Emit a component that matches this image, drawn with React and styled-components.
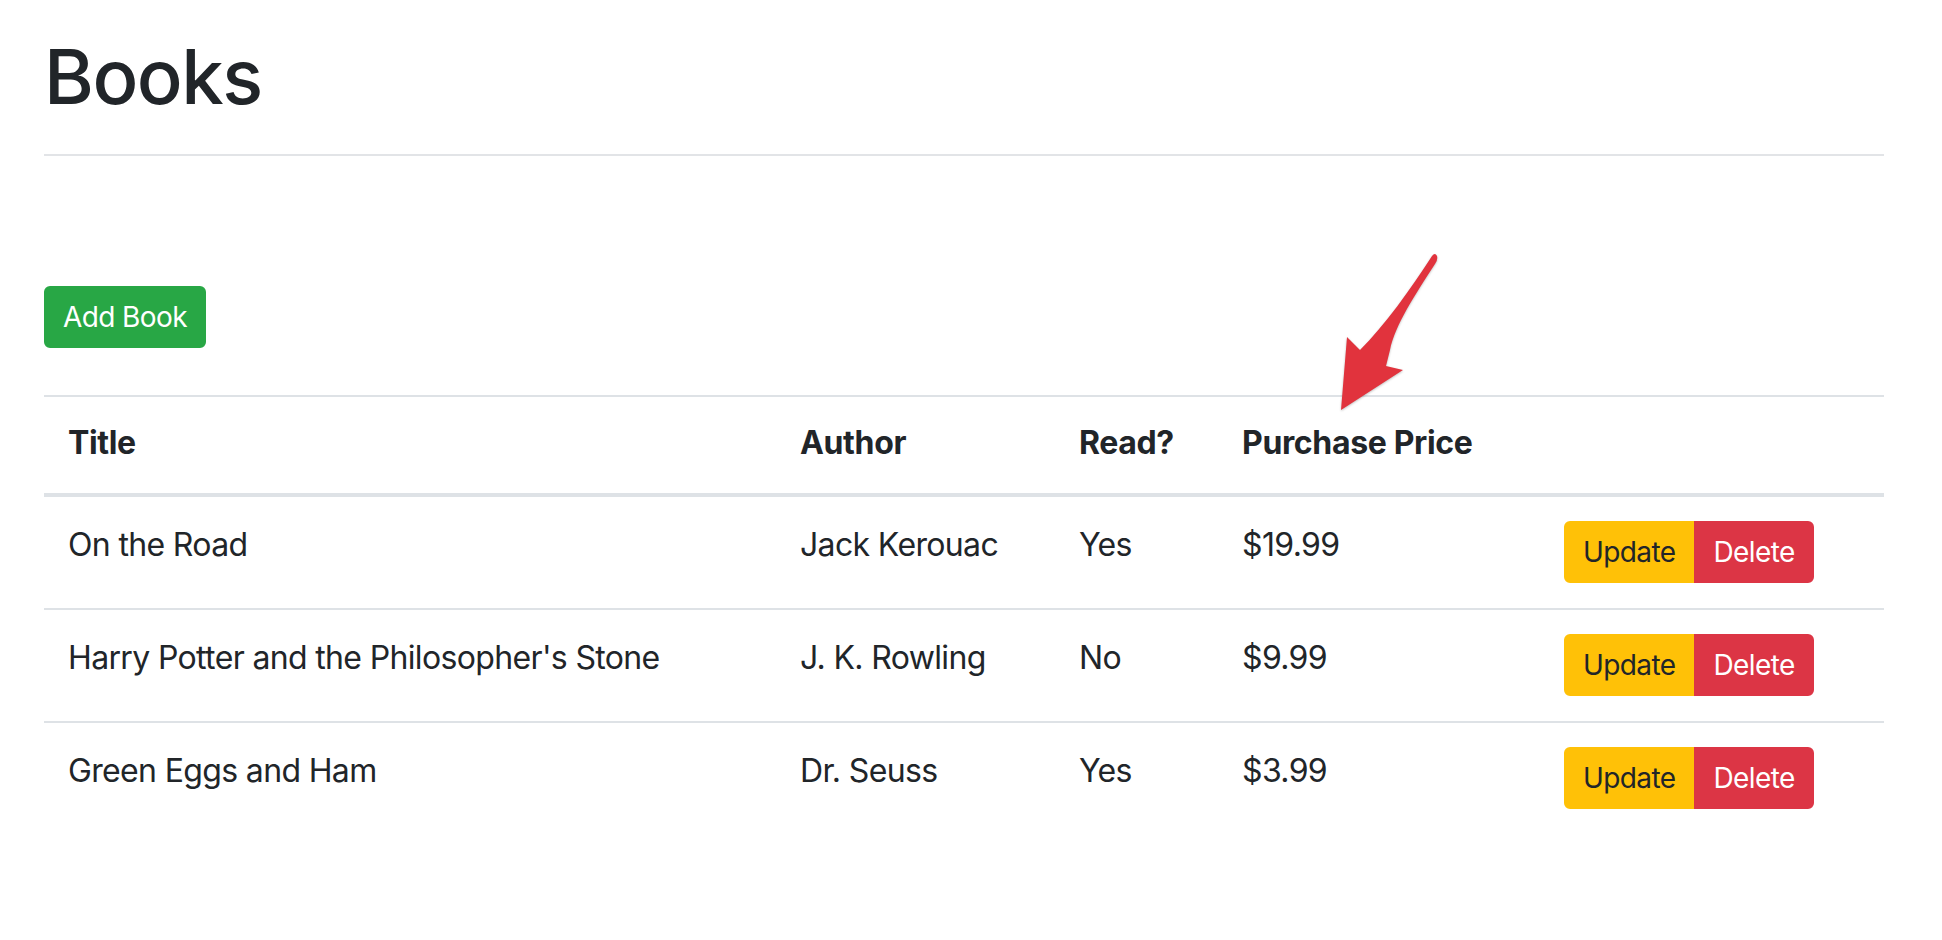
import React from "react";
import styled, { createGlobalStyle } from "styled-components";

const GlobalStyle = createGlobalStyle`
  html, body { margin: 0; padding: 0; background: #ffffff; }
  body {
    font-family: Inter, "Noto Sans", "Liberation Sans", sans-serif;
    color: #212529;
    -webkit-font-smoothing: antialiased;
  }
`;

const Page = styled.div`
  position: relative;
  padding: 31px 58px 0 44px;
`;

const Heading = styled.h1`
  margin: 0 0 16px;
  font-size: 76px;
  font-weight: 500;
  line-height: 1.2;
  letter-spacing: -1.5px;
`;

const Divider = styled.hr`
  margin: 32px 0 130px;
  border: 0;
  border-top: 2px solid #e2e4e7;
`;

const Btn = styled.button`
  display: inline-block;
  font-family: inherit;
  font-size: 28px;
  line-height: 42px;
  font-weight: 400;
  padding: 8px 17px;
  border: 2px solid ${(p) => p.$bg};
  background: ${(p) => p.$bg};
  color: ${(p) => p.$fg};
  border-radius: 6px;
  cursor: pointer;
  letter-spacing: -0.6px;
`;

const Toolbar = styled.div`
  display: flex;
  margin-bottom: 47px;
`;

const Table = styled.table`
  width: 100%;
  border-collapse: collapse;
  table-layout: fixed;
  font-size: 32px;
  line-height: 48px;
  letter-spacing: -0.65px;
`;

const HeadCell = styled.th`
  text-align: left;
  font-weight: 700;
  letter-spacing: -0.35px;
  padding: 22px 24px 26px;
  border-top: 2px solid #dee2e6;
  border-bottom: 4px solid #dee2e6;
  vertical-align: bottom;
`;

const Cell = styled.td`
  padding: 24px 24px 25px;
  border-top: 2px solid #dee2e6;
  vertical-align: top;
`;

const ActionCell = styled(Cell)`
  padding-top: 24px;
`;

const Group = styled.div`
  display: inline-flex;
  & > button:first-child { border-top-right-radius: 0; border-bottom-right-radius: 0; }
  & > button:last-child { border-top-left-radius: 0; border-bottom-left-radius: 0; }
`;

const Arrow = styled.svg`
  position: absolute;
  left: 1330px;
  top: 240px;
  width: 120px;
  height: 180px;
  overflow: visible;
  filter: drop-shadow(0 1px 1px rgba(0, 0, 0, 0.25));
`;

const books = [
  { title: "On the Road", author: "Jack Kerouac", read: "Yes", price: "$19.99" },
  { title: "Harry Potter and the Philosopher's Stone", author: "J. K. Rowling", read: "No", price: "$9.99" },
  { title: "Green Eggs and Ham", author: "Dr. Seuss", read: "Yes", price: "$3.99" },
];

export default function App() {
  return (
    <>
      <GlobalStyle />
      <Page>
        <Heading>Books</Heading>
        <Divider />
        <Toolbar>
          <Btn $bg="#28a745" $fg="#ffffff">Add Book</Btn>
        </Toolbar>
        <Table>
          <colgroup>
            <col style={{ width: 732 }} />
            <col style={{ width: 279 }} />
            <col style={{ width: 163 }} />
            <col style={{ width: 322 }} />
            <col />
          </colgroup>
          <thead>
            <tr>
              <HeadCell>Title</HeadCell>
              <HeadCell>Author</HeadCell>
              <HeadCell>Read?</HeadCell>
              <HeadCell>Purchase Price</HeadCell>
              <HeadCell />
            </tr>
          </thead>
          <tbody>
            {books.map((b) => (
              <tr key={b.title}>
                <Cell>{b.title}</Cell>
                <Cell>{b.author}</Cell>
                <Cell>{b.read}</Cell>
                <Cell>{b.price}</Cell>
                <ActionCell>
                  <Group>
                    <Btn $bg="#ffc107" $fg="#212529">Update</Btn>
                    <Btn $bg="#dc3545" $fg="#ffffff">Delete</Btn>
                  </Group>
                </ActionCell>
              </tr>
            ))}
          </tbody>
        </Table>
        <Arrow viewBox="0 0 120 180">
          <path
            d="M 102 16 Q 105 12 107 16 Q 108 20 105 24 C 85 55 65 85 60 110 L 56 126 L 73 130 L 11 170 L 17 97 L 30 110 C 55 85 80 50 102 16 Z"
            fill="#e1333d"
          />
        </Arrow>
      </Page>
    </>
  );
}
